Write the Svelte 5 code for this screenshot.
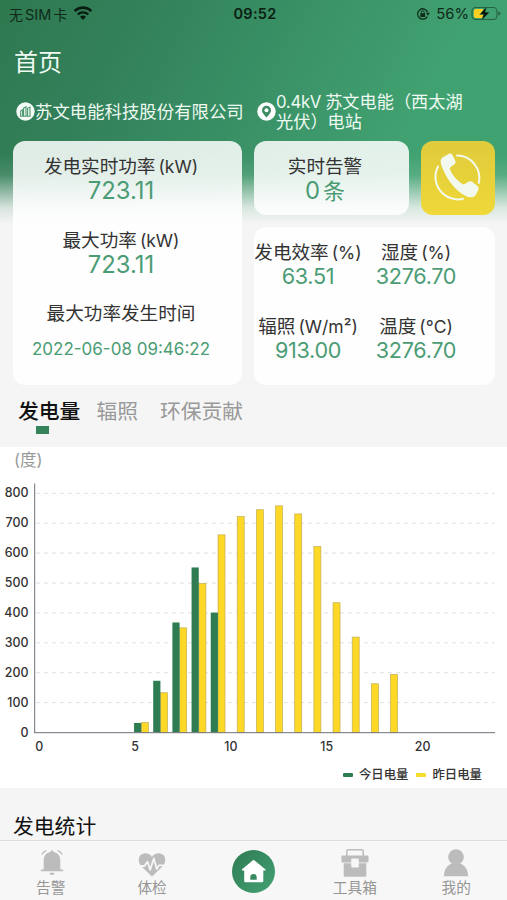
<script lang="ts">
    const today = [0, 0, 0, 0, 0, 32, 173, 368, 552, 401]
    const yesterday = [0, 0, 0, 0, 0, 33, 133, 350, 498, 661, 722, 745, 758, 731, 622, 434, 319, 163, 194]

    const left = [
        { label: '发电实时功率', unit: '(kW)', value: '723.11' },
        { label: '最大功率', unit: '(kW)', value: '723.11' },
    ]
    const right = [
        { label: '发电效率', unit: '(%)', value: '63.51' },
        { label: '湿度', unit: '(%)', value: '3276.70' },
        { label: '辐照', unit: '(W/m²)', value: '913.00' },
        { label: '温度', unit: '(°C)', value: '3276.70' },
    ]

    const ticks = [0, 100, 200, 300, 400, 500, 600, 700, 800]
    const hours = [0, 5, 10, 15, 20]
    const step = 19.17
    const base = 259.5

    const y = (v: number) => base - v * 0.299
    const x = (i: number) => 35 + i * step
</script>

<div class="page">
    <header>
        <div class="status">
            <div class="side">
                <span class="carrier">无<i>SIM</i>卡</span>
                <svg width="20" height="15" viewBox="0 0 20 15">
                    <path d="M1.6 5.1a12 12 0 0 1 16.8 0" fill="none" stroke="#0a1d12" stroke-width="2.6" />
                    <path d="M4.7 8.500a7.600 7.600 0 0 1 10.600 0" fill="none" stroke="#0a1d12" stroke-width="2.400" />
                    <path d="M7 10.800a4.400 4.400 0 0 1 6 0L10 13.900z" fill="#0a1d12" />
                </svg>
            </div>
            <b class="clock">09:52</b>
            <div class="side end">
                <svg width="14" height="14" viewBox="0 0 14 14">
                    <path d="M11.3 9.6A5.2 5.2 0 1 1 11.6 5" fill="none" stroke="#0f2a1b" stroke-width="1.3" />
                    <path d="M9.8 5.8h4L12 8.8z" fill="#0f2a1b" />
                    <rect x="4.3" y="6.3" width="4.8" height="3.8" rx=".6" fill="#0f2a1b" />
                    <path d="M5.2 6.5V5.3a1.5 1.5 0 0 1 3 0v1.2" fill="none" stroke="#0f2a1b" />
                </svg>
                <span class="percent">56%</span>
                <svg width="30" height="16" viewBox="0 0 30 16">
                    <rect x="1" y="1.500" width="25" height="12" rx="3.600" fill="none" stroke="#246343" stroke-width="1.100" />
                    <path d="M5 3.100h7v8.800H5a2.200 2.200 0 0 1-2.200-2.200V5.300A2.200 2.200 0 0 1 5 3.100z" fill="#fdd021" />
                    <path d="M27.400 5.500v4a2 2 0 0 0 0-4z" fill="#246343" />
                    <path d="M15.800.5L8.600 8.400h4l-2.200 6.100 8-8.300h-4.300z" fill="#04120a" stroke="#3b8e62" stroke-width=".4" />
                </svg>
            </div>
        </div>
        <h1>首页</h1>
        <div class="place">
            <div class="company">
                <svg width="19" height="19" viewBox="0 0 19 19">
                    <circle cx="9.5" cy="9.5" r="9.2" fill="#f4faf6" />
                    <path d="M4.7 14V9l1.900-1.200V14M7.600 14V6.400L10 4.800V14M11.600 14V6.300l2.400-1.200V14M3.800 14.300h10.900" fill="none" stroke="#4d9770" stroke-width="1.100" />
                </svg>
                <span>苏文电能科技股份有限公司</span>
            </div>
            <div class="station">
                <svg width="19" height="19" viewBox="0 0 19 19">
                    <circle cx="9.5" cy="9.5" r="9.2" fill="#fff" />
                    <path d="M9.5 15.6C6.7 12.6 5 10.500 5 8.300a4.500 4.500 0 0 1 9 0c0 2.200-1.700 4.300-4.500 7.300z" fill="#3c8d63" />
                    <circle cx="9.500" cy="8.300" r="2" fill="#fff" />
                </svg>
                <span><i>0.4kV</i>苏文电能（西太湖<br />光伏）电站</span>
            </div>
        </div>
    </header>

    <section class="cards">
        <div class="card power">
            {#each left as item}
                <div class="metric">
                    <div class="label">{item.label}<span>{item.unit}</span></div>
                    <div class="value">{item.value}</div>
                </div>
            {/each}
            <div class="metric">
                <div class="label">最大功率发生时间</div>
                <div class="date">2022-06-08 09:46:22</div>
            </div>
        </div>
        <div class="column">
            <div class="top">
                <div class="card alarm">
                    <div class="label">实时告警</div>
                    <div class="value">0<em>条</em></div>
                </div>
                <div class="call">
                    <svg width="74" height="74" viewBox="0 0 74 74">
                        <path d="M36 14.600A22.500 22.500 0 0 1 57.800 42" fill="none" stroke="#f3f9ee" stroke-width="2" stroke-linecap="round" />
                        <path d="M17 25.500A22.500 22.500 0 0 0 42 57.800" fill="none" stroke="#f3f9ee" stroke-width="2" stroke-linecap="round" />
                        <path d="M21.500 16.500L27.500 13q2.600-1.200 3.900 1l3 6q.8 1.900-.8 3.200L29.800 25.700q-1.500 1.300-.6 3.300C31.500 34.500 36 39.500 41 42.800q1.500 1 3 .1L47.800 40.600q1.700-1 3.300.2L56.700 45.200q1.600 1.500.8 3.300L55 53.500C53.300 56.800 48.500 57.100 44.600 55.100 33.500 49.300 24.500 36.500 20.100 23.500 19.300 20.500 19.300 18 21.500 16.500z" fill="#f3f9ee" />
                    </svg>
                </div>
            </div>
            <div class="card weather">
                {#each right as item}
                    <div class="metric">
                        <div class="label">{item.label}<span>{item.unit}</span></div>
                        <div class="value">{item.value}</div>
                    </div>
                {/each}
            </div>
        </div>
    </section>

    <nav class="tabs">
        <span class="active">发电量</span>
        <span>辐照</span>
        <span>环保贡献</span>
    </nav>

    <section class="chart">
        <div class="unit">(度)</div>
        <svg width="507" height="288" viewBox="0 0 507 288">
            {#each ticks as t}
                {#if t > 0}
                    <line x1="36" x2="495" y1={y(t)} y2={y(t)} stroke="#e0e0e0" stroke-dasharray="4 4" />
                {/if}
                <text class="tick" x="28.500" y={y(t) + 4} text-anchor="end">{t}</text>
            {/each}
            {#each yesterday as v, i}
                {#if v > 0}
                    <rect x={x(i) + 10.500} y={y(v)} width="7" height={base - y(v)} fill="#fdd827" stroke="#c3ae55" stroke-width=".7" />
                {/if}
            {/each}
            {#each today as v, i}
                {#if v > 0}
                    <rect x={x(i) + 3.200} y={y(v)} width="7.200" height={base - y(v)} fill="#2f7c53" />
                {/if}
            {/each}
            <line x1="34.700" x2="34.700" y1="10.500" y2="260" stroke="#6e7079" />
            <line x1="34.200" x2="495" y1="259.700" y2="259.700" stroke="#6e7079" />
            {#each hours as h}
                <text class="tick" x={x(h) + 4.200} y="277.500" text-anchor="middle">{h}</text>
            {/each}
        </svg>
        <div class="legend">
            <span><i class="green"></i>今日电量</span>
            <span><i class="yellow"></i>昨日电量</span>
        </div>
    </section>

    <h2>发电统计</h2>

    <footer>
        <div class="item">
            <svg class="bell" width="28" height="30" viewBox="0 0 28 30">
                <g fill="#bcbcbc">
                    <path d="M14 2.500c.9 0 1.500.6 1.600 1.400 4.300.8 6.700 3.900 6.700 8.200v9.300h2q.9 0 .9.900v.9H2.800v-.9q0-.9.9-.9h2v-9.300c0-4.300 2.400-7.400 6.700-8.200.1-.8.700-1.400 1.600-1.400z" />
                    <path d="M11.500 24.800h5a2.500 2.200 0 0 1-5 0z" />
                </g>
                <path d="M3.800 6.300Q5.600 3.700 8.400 2.600M24.200 6.300Q22.400 3.700 19.600 2.600" fill="none" stroke="#bcbcbc" stroke-width="1.400" />
            </svg>
            <span>告警</span>
        </div>
        <div class="item">
            <svg width="28" height="30" viewBox="0 0 28 30">
                <path d="M14 28.500L3.300 18.200C-.8 13.700-.2 6 6.500 5.400c3.200-.3 5.900 1 7.500 3.600 1.600-2.600 4.300-3.900 7.500-3.600 6.700.6 7.300 8.300 3.200 12.800z" fill="#bcbcbc" />
                <path d="M1.500 18h5l3-4.200 2.700 8 3.600-11.400 3 10.700 2-3.800h5.700" fill="none" stroke="#f7f7f7" stroke-width="1.800" stroke-linejoin="round" />
            </svg>
            <span>体检</span>
        </div>
        <div class="item">
            <svg class="home" width="43" height="43" viewBox="0 0 43 43">
                <defs>
                    <linearGradient id="ring" x1="0" y1="0" x2="1" y2="1">
                        <stop offset="0" stop-color="#2f7b52" />
                        <stop offset="1" stop-color="#42a173" />
                    </linearGradient>
                </defs>
                <circle cx="21.500" cy="21.500" r="21.500" fill="url(#ring)" />
                <path d="M21.500 9.700l12 9.700q.7 1.200-.8 1.200h-1.400v10.500q0 1.200-1.200 1.200H13.400q-1.200 0-1.200-1.200V20.600h-1.600q-1.300-.2-.5-1.300z" fill="#fff" />
                <path d="M18.300 29.800v-2.600a3.200 3.200 0 0 1 6.400 0v2.600z" fill="#388b60" />
            </svg>
        </div>
        <div class="item">
            <svg width="28" height="30" viewBox="0 0 28 30">
                <path d="M5.800 8V3.200q0-1.500 1.500-1.500h13.400q1.500 0 1.500 1.500V8" fill="none" stroke="#bcbcbc" stroke-width="1.500" />
                <path d="M1.300 7.500h25.400q.8 0 .8.800v5.400q0 .8-.8.800h-8.900v-3q0-1-1-1h-5.600q-1 0-1 1v3H1.300q-.8 0-.8-.8V8.300q0-.8.800-.8zM2.700 15.300h7.500v3.200q0 1 1 1h5.600q1 0 1-1v-3.200h7.500v12.100q0 1.300-1.300 1.300H4q-1.300 0-1.300-1.300z" fill="#bcbcbc" />
            </svg>
            <span>工具箱</span>
        </div>
        <div class="item">
            <svg width="28" height="30" viewBox="0 0 28 30">
                <circle cx="14" cy="9" r="7.800" fill="#bcbcbc" />
                <path d="M1.900 28.300c0-6.700 3.300-11 8-12.800h8.200c4.700 1.800 8 6.100 8 12.800z" fill="#bcbcbc" />
            </svg>
            <span>我的</span>
        </div>
    </footer>
</div>

<style>
    :global(body) {
        background: #f5f5f5;
    }
    .page {
        display: flex;
        flex-direction: column;
        width: 507px;
        height: 900px;
        overflow: hidden;
        font-family: Inter, 'Noto Sans CJK SC', sans-serif;
        background:
            linear-gradient(to bottom, rgba(245, 245, 245, 0) 155px, rgba(245, 245, 245, 0.12) 175px, rgba(245, 245, 245, 0.85) 208px, #f5f5f5 224px),
            linear-gradient(118deg, #2f794f 0, #32805a 120px, #41a271 430px, #41a271 100%) 0 0 / 100% 240px no-repeat,
            #f5f5f5;
    }
    i, em {
        font-style: normal;
    }
    svg {
        display: block;
        flex: none;
    }
    header {
        height: 141px;
        color: #eefaf2;
    }
    .status {
        display: grid;
        grid-template-columns: 1fr auto 1fr;
        align-items: center;
        height: 27px;
        padding: 0 6px 0 9px;
        color: #0f2a1b;
        font-size: 15px;
    }
    .side {
        display: flex;
        align-items: center;
        gap: 6px;
    }
    .end {
        justify-content: flex-end;
    }
    .carrier {
        font-size: 14px;
    }
    .carrier i {
        margin: 0 2px;
        font-size: 14.500px;
    }
    .clock {
        color: #0a1d12;
        font-size: 14.500px;
        font-weight: 600;
        letter-spacing: 0.3px;
    }
    .percent {
        margin-right: -4px;
        font-size: 14.800px;
    }
    h1 {
        height: 70px;
        margin: 0;
        padding-left: 14px;
        font-size: 24px;
        font-weight: 400;
        line-height: 71px;
    }
    .place {
        display: flex;
        align-items: center;
        height: 29px;
        padding-left: 16px;
        font-size: 17.400px;
        line-height: 20px;
    }
    .company,
    .station {
        display: flex;
        align-items: center;
        white-space: nowrap;
    }
    .company {
        width: 241px;
    }
    .station {
        font-size: 17.200px;
    }
    .station i {
        margin-right: 4px;
        font-size: 16.800px;
        letter-spacing: -0.3px;
    }
    .cards {
        display: flex;
        gap: 12px;
        height: 244px;
        padding: 0 12px 0 13px;
    }
    .card {
        box-sizing: border-box;
        border-radius: 12px;
        background: rgba(255, 255, 255, 0.85);
        text-align: center;
    }
    .power {
        width: 229px;
        padding: 13px 13px 0 0;
    }
    .column {
        display: flex;
        flex-direction: column;
        gap: 12px;
    }
    .top {
        display: flex;
        gap: 12px;
    }
    .alarm {
        width: 155px;
        height: 74px;
        padding: 13px 13px 0 0;
    }
    .call {
        width: 74px;
        height: 74px;
        border-radius: 12px;
        background: linear-gradient(#dfcb3c, #efd838);
    }
    .weather {
        display: grid;
        grid-template-columns: 108px 108px;
        width: 241px;
        height: 158px;
        padding-top: 13px;
    }
    .metric {
        height: 73.5px;
    }
    .label {
        color: #333;
        font-size: 18.600px;
        line-height: 25px;
        white-space: nowrap;
    }
    .label span {
        margin-left: 3px;
        font-size: 17.500px;
    }
    .value {
        color: #4b9c74;
        font-size: 23.800px;
        line-height: 23px;
    }
    .weather .value {
        font-size: 21.600px;
        letter-spacing: -0.3px;
    }
    .value em {
        margin-left: 3px;
        font-size: 22px;
    }
    .date {
        color: #4b9c74;
        font-size: 17px;
        line-height: 47px;
        white-space: nowrap;
    }
    .tabs {
        display: flex;
        height: 62px;
        padding-left: 18px;
        color: #999;
        font-size: 20.800px;
        line-height: 53px;
    }
    .tabs span {
        margin-right: 22px;
    }
    .tabs .active {
        position: relative;
        margin-right: 16px;
        color: #111;
        font-weight: 500;
    }
    .active::after {
        content: '';
        position: absolute;
        left: 18px;
        top: 41px;
        width: 13px;
        height: 8px;
        background: #35835b;
    }
    .chart {
        height: 341px;
        background: #fff;
    }
    .unit {
        height: 26px;
        padding-left: 14px;
        color: #999;
        font-size: 16.500px;
        line-height: 26px;
    }
    .tick {
        fill: #333;
        font-size: 12.400px;
        font-weight: 500;
    }
    .legend {
        display: flex;
        justify-content: flex-end;
        gap: 8px;
        padding-right: 25px;
        color: #333;
        font-size: 12.400px;
        font-weight: 500;
        line-height: 27px;
    }
    .legend span {
        display: flex;
        align-items: center;
        gap: 6px;
    }
    .legend i {
        width: 10px;
        height: 4px;
        border-radius: 1px;
    }
    .green {
        background: #2f7c53;
    }
    .yellow {
        background: #f7dc2c;
    }
    h2 {
        height: 52px;
        margin: 0;
        padding-left: 13px;
        color: #111;
        font-size: 20.800px;
        font-weight: 400;
        line-height: 77px;
    }
    footer {
        display: grid;
        grid-template-columns: repeat(5, 1fr);
        box-sizing: border-box;
        height: 60px;
        border-top: 1px solid #dedede;
        background: #f7f7f7;
    }
    .item {
        display: flex;
        flex-direction: column;
        align-items: center;
        padding-top: 7px;
        color: #969696;
        font-size: 14.700px;
        line-height: 20px;
    }
    .bell {
        margin-left: 2px;
    }
    .home {
        margin-top: 2px;
    }
</style>
